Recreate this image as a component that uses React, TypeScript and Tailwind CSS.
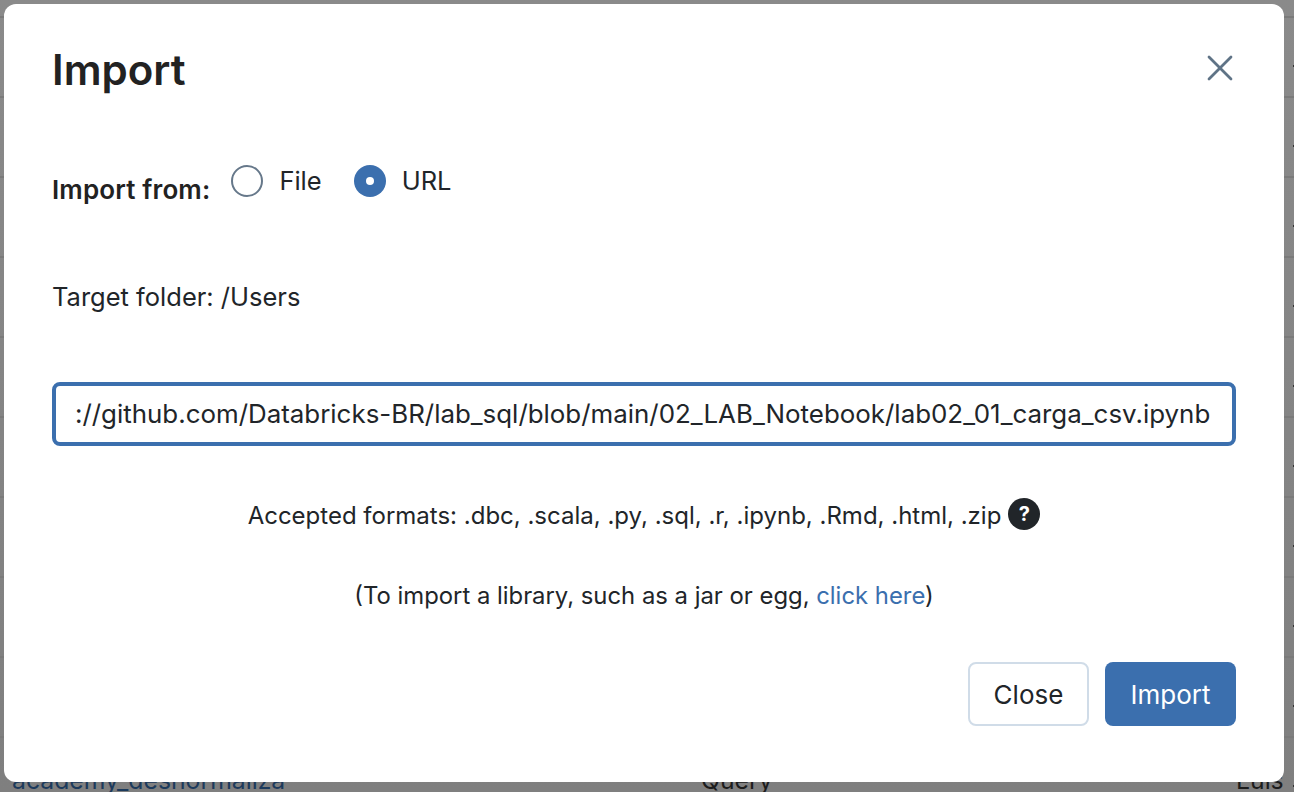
import { X } from 'lucide-react';

const rows = [0, 1, 2, 3, 4, 5, 6, 7, 8, 9];

function Radio({ label, checked }: { label: string; checked?: boolean }) {
  return (
    <label className="flex items-center gap-[16px] text-[25.5px]">
      {checked ? (
        <span className="flex h-[32px] w-[32px] items-center justify-center rounded-full bg-[#3b6fae]">
          <span className="h-[8px] w-[8px] rounded-full bg-white" />
        </span>
      ) : (
        <span className="h-[32px] w-[32px] rounded-full border-2 border-[#66788a] bg-white" />
      )}
      <span>{label}</span>
    </label>
  );
}

export default function App() {
  return (
    <div className="relative h-[792px] w-[1294px] overflow-hidden bg-gradient-to-b from-[#8a8a8a] to-[#7f7f7f] font-['Inter',sans-serif] text-[24px] text-[#212529]">
      {/* table behind the modal */}
      <div className="flex flex-col pt-[16px]">
        {rows.map((r) => (
          <div key={r} className="relative h-[80px] border-t-2 border-[#7a7a7a]">
            <span className="absolute right-0 top-[47px] h-[2px] w-[1px] bg-[#333333]" />
          </div>
        ))}
      </div>
      <div className="absolute bottom-[-7px] left-[12px] text-[24.75px] text-[#1c3a5c]">academy_desnormaliza</div>
      <div className="absolute bottom-[-7px] left-[701px] text-[24.75px] text-[#1c1c1c]">Query</div>
      <div className="absolute bottom-[-7px] left-[1236px] text-[24.75px] text-[#1c1c1c]">Luis</div>

      {/* modal */}
      <div className="absolute left-[4px] top-[4px] flex h-[778px] w-[1280px] flex-col rounded-[12px] bg-white px-[48px]">
        <div className="flex items-center justify-between pt-[36px]">
          <h1 className="text-[42px] font-semibold leading-[60px] text-[#222222]">Import</h1>
          <button className="mr-[-6px] mt-[-4px] text-[#5f7386]">
            <X size={44} strokeWidth={1.5} />
          </button>
        </div>

        <div className="mt-[60px] flex items-start gap-[21px]">
          <span className="mt-[10px] text-[26px] font-semibold tracking-[0.15px] text-[#222222]">Import from:</span>
          <div className="mt-[5px] flex gap-[32px] leading-[32px]">
            <Radio label="File" />
            <Radio label="URL" checked />
          </div>
        </div>

        <div className="mt-[70px] text-[25.5px] leading-[36px]">Target folder: /Users</div>

        <div className="mt-[67px] flex h-[64px] items-center overflow-hidden rounded-[8px] border-4 border-[#3b6fae] px-[19px] text-[25.9px]">
          <span className="whitespace-nowrap">
            ://github.com/Databricks-BR/lab_sql/blob/main/02_LAB_Notebook/lab02_01_carga_csv.ipynb
          </span>
        </div>

        <div className="mt-[52px] flex items-center justify-center gap-[7px] leading-[36px]">
          <span>Accepted formats: .dbc, .scala, .py, .sql, .r, .ipynb, .Rmd, .html, .zip</span>
          <span className="mt-[-4px] flex h-[32px] w-[32px] items-center justify-center rounded-full bg-[#212529] text-[20px] font-bold text-white">
            ?
          </span>
        </div>

        <div className="mt-[44px] text-center text-[23.85px] leading-[36px]">
          (To import a library, such as a jar or egg, <span className="text-[#3b6fae]">click here</span>)
        </div>

        <div className="mt-[48px] flex justify-end gap-[16px] text-[26px]">
          <button className="h-[64px] w-[121px] rounded-[8px] border-2 border-[#d0dce8] bg-white">Close</button>
          <button className="h-[64px] w-[131px] rounded-[8px] bg-[#3b6fae] text-white">Import</button>
        </div>
      </div>
    </div>
  );
}
